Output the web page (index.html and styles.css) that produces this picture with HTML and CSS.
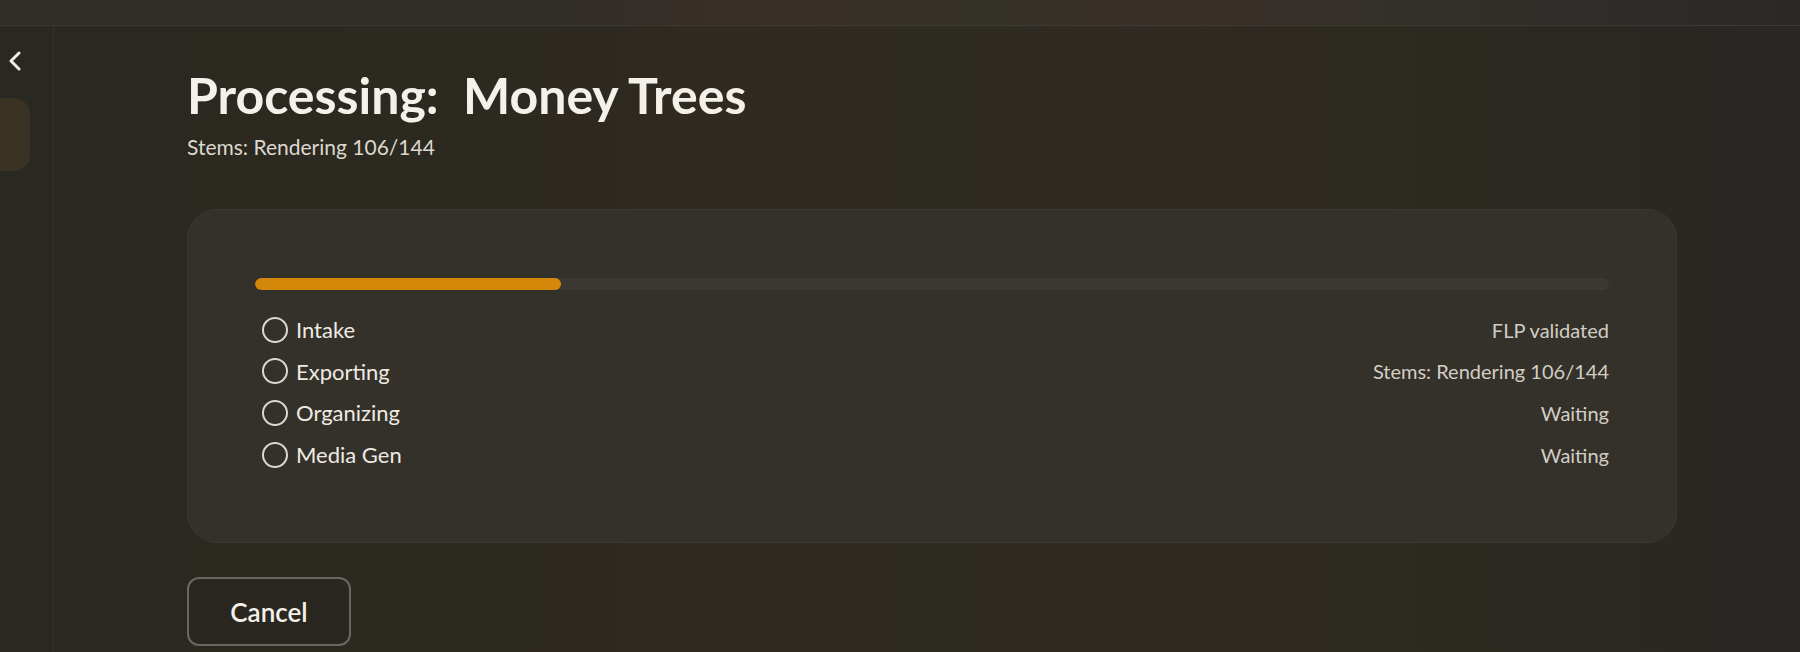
FILE: index.html
```html
<!DOCTYPE html>
<html lang="en">
<head>
    <meta charset="UTF-8">
    <meta name="viewport" content="width=device-width, initial-scale=1.0">
    <title>Processing: Money Trees</title>
    <link rel="stylesheet" href="styles.css">
</head>
<body>
    <div class="topbar"></div>
    <div class="layout">
        <aside class="sidebar">
            <button class="collapse" aria-label="Collapse sidebar">
                <svg width="14" height="20" viewBox="0 0 14 20">
                    <path d="M11 2 L3 10 L11 18" fill="none" stroke="#f2efe9" stroke-width="3" stroke-linecap="round" stroke-linejoin="round"/>
                </svg>
            </button>
            <div class="nav-item active"></div>
        </aside>

        <main class="main">
            <h1 class="title">Processing:&nbsp; Money Trees</h1>
            <p class="subtitle">Stems: Rendering 106/144</p>

            <section class="card">
                <div class="progress">
                    <div class="progress-fill" style="width: 22.6%"></div>
                </div>
                <ul class="steps">
                    <li class="step">
                        <span class="dot"></span>
                        <span class="step-name">Intake</span>
                        <span class="step-status">FLP validated</span>
                    </li>
                    <li class="step">
                        <span class="dot"></span>
                        <span class="step-name">Exporting</span>
                        <span class="step-status">Stems: Rendering 106/144</span>
                    </li>
                    <li class="step">
                        <span class="dot"></span>
                        <span class="step-name">Organizing</span>
                        <span class="step-status">Waiting</span>
                    </li>
                    <li class="step">
                        <span class="dot"></span>
                        <span class="step-name">Media Gen</span>
                        <span class="step-status">Waiting</span>
                    </li>
                </ul>
            </section>

            <button class="cancel">Cancel</button>
        </main>
    </div>
</body>
</html>
```

FILE: styles.css
```css
body {
    margin: 0;
    padding: 0;
    height: 652px;
    overflow: hidden;
    font-family: Lato, 'Noto Sans', sans-serif;
    color: #f2efe9;
    background: #2b2821;
}
.topbar {
    height: 25px;
    border-bottom: 1px solid #3b3935;
    background: linear-gradient(to right, #2f2d28 0%, #302d27 30%, #3a2f28 42%, #35322a 55%, #3a2f28 65%, #33302a 78%, #2e2c29 92%, #2a2927 100%);
}
.layout {
    display: flex;
    height: 626px;
}
.sidebar {
    width: 54px;
    flex-shrink: 0;
    border-right: 1px solid #34322d;
    background: #2a2823;
    padding-top: 25px;
    box-sizing: border-box;
}
.collapse {
    display: block;
    background: none;
    border: none;
    padding: 0 0 0 8px;
    height: 20px;
    cursor: pointer;
}
.nav-item {
    margin-top: 27px;
    width: 30px;
    height: 73px;
    border-radius: 0 16px 16px 0;
    background: #3a3222;
}
.main {
    flex: 1;
    padding: 39px 0 0 133px;
    background: linear-gradient(to right, #2a2820 0%, #2c2920 25%, #312a21 40%, #2e2b21 50%, #312a22 62%, #2d2a20 75%, #2b2822 88%, #292724 100%);
}
.title {
    margin: 0;
    font-size: 50px;
    line-height: 60px;
    font-weight: 700;
    color: #f4f1eb;
}
.subtitle {
    margin: 10px 0 0;
    font-size: 21px;
    line-height: 24px;
    color: #ddd8cf;
}
.card {
    margin-top: 50px;
    width: 1490px;
    box-sizing: border-box;
    padding: 68px 67px 67px;
    border-radius: 30px;
    background: #34312a;
    border: 1px solid #3b3832;
}
.progress {
    height: 12px;
    border-radius: 6px;
    background: #3c3933;
    overflow: hidden;
}
.progress-fill {
    height: 100%;
    border-radius: 6px;
    background: #d4880a;
}
.steps {
    list-style: none;
    margin: 19px 0 0;
    padding: 0;
}
.step {
    display: flex;
    align-items: center;
    height: 41.6px;
}
.dot {
    width: 22px;
    height: 22px;
    margin-left: 7px;
    border: 2px solid #dcd8d0;
    border-radius: 50%;
    flex-shrink: 0;
}
.step-name {
    margin-left: 8px;
    font-size: 22px;
    color: #eeeae3;
}
.step-status {
    margin-left: auto;
    font-size: 20px;
    color: #d2cdc4;
}
.cancel {
    margin-top: 34px;
    width: 164px;
    height: 69px;
    border: 2px solid #6a6760;
    border-radius: 12px;
    background: #2a2720;
    color: #f4f1eb;
    font-family: Lato, 'Noto Sans', sans-serif;
    font-size: 26px;
    font-weight: 600;
    cursor: pointer;
}
```
